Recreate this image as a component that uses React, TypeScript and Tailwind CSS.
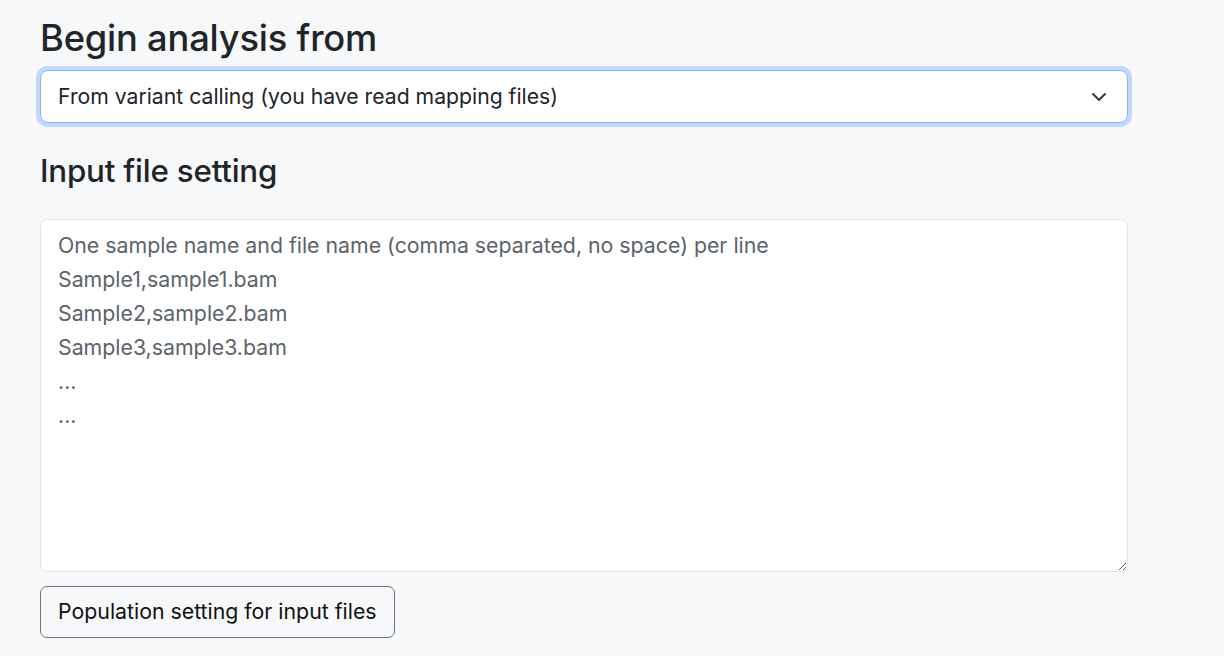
export default function App() {
  const placeholder =
    "One sample name and file name (comma separated, no space) per line\nSample1,sample1.bam\nSample2,sample2.bam\nSample3,sample3.bam\n...\n...";

  return (
    <div
      className="min-h-screen bg-[#f7f8fa] text-[#212529]"
      style={{ fontFamily: "Inter, 'Noto Sans', sans-serif" }}
    >
      <div className="w-[1088px] pl-[40px] pt-[14px] box-content">
        <h2 className="text-[36.3px] leading-[48px] font-medium tracking-[-0.2px] mb-[8px]">
          Begin analysis from
        </h2>

        {/* Select with focus ring */}
        <div className="relative rounded-[8px] border border-[#86b7fe] bg-white h-[53px] shadow-[0_0_0_4px_#c2d8fd]">
          <select
            className="appearance-none w-full h-full bg-transparent pl-[17px] pr-[48px] text-[21.2px] text-[#212529] outline-none"
            defaultValue="vc"
          >
            <option value="vc">From variant calling (you have read mapping files)</option>
          </select>
          <svg
            className="absolute right-[20px] top-[19px] pointer-events-none"
            width="16"
            height="14"
            viewBox="0 0 16 14"
            fill="none"
          >
            <path d="M2 4l6 6 6-6" stroke="#343a40" strokeWidth="2" strokeLinecap="round" strokeLinejoin="round" />
          </svg>
        </div>

        <h3 className="text-[31.3px] leading-[42px] font-medium tracking-[-0.2px] mt-[27px] mb-[27px]">
          Input file setting
        </h3>

        <textarea
          className="block w-full h-[353px] bg-white border border-[#e3e5e8] rounded-[7px] px-[17px] pt-[8px] pb-[10px] text-[21.3px] leading-[34px] placeholder:text-[#5c636a] outline-none"
          placeholder={placeholder}
        />

        <button className="mt-[14px] h-[52px] px-[17px] rounded-[7px] border border-[#6c757d] text-[21.3px] text-[#111] bg-transparent">
          Population setting for input files
        </button>
      </div>
    </div>
  );
}
